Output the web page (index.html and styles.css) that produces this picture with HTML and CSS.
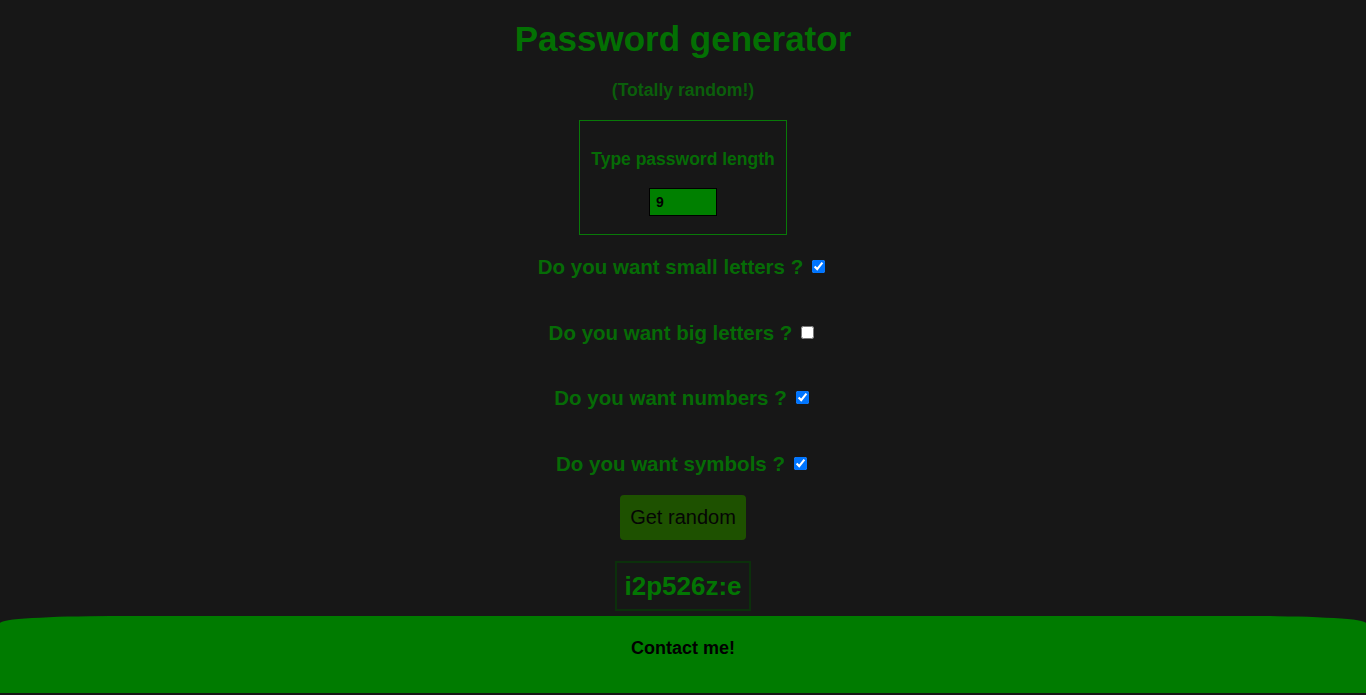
FILE: index.html
```html
<!DOCTYPE html>
<html lang="en">
<head>
<meta charset="utf-8">
<title>Password generator</title>
<link rel="stylesheet" href="styles.css">
</head>
<body>
<main class="page">
  <h1 class="title">Password generator</h1>
  <p class="subtitle">(Totally random!)</p>
  <div class="length-box">
    <label class="length-label" for="len">Type password length</label>
    <input class="length-input" id="len" type="text" value="9">
  </div>
  <div class="options">
    <label class="option">Do you want small letters ? <input type="checkbox" checked></label>
    <label class="option">Do you want big letters ? <input type="checkbox"></label>
    <label class="option">Do you want numbers ? <input type="checkbox" checked></label>
    <label class="option">Do you want symbols ? <input type="checkbox" checked></label>
  </div>
  <button class="get-btn" type="button">Get random</button>
  <div class="result">i2p526z:e</div>
</main>
<footer class="footer">Contact me!</footer>
</body>
</html>
```

FILE: styles.css
```css
html, body {
  margin: 0;
  padding: 0;
}
body {
  background: #171717;
  font-family: "Liberation Sans", Arial, sans-serif;
  height: 695px;
  overflow: hidden;
}
.page {
  display: flex;
  flex-direction: column;
  align-items: center;
}
.title {
  margin: 18px 0 0;
  font-size: 35px;
  line-height: 41px;
  font-weight: bold;
  color: #037003;
}
.subtitle {
  margin: 21px 0 0;
  font-size: 17.6px;
  line-height: 21px;
  font-weight: bold;
  color: #0b5e0b;
}
.length-box {
  margin-top: 19px;
  width: 206px;
  height: 113px;
  border: 1px solid #087a08;
  display: flex;
  flex-direction: column;
  align-items: center;
}
.length-label {
  margin-top: 29px;
  font-size: 17.5px;
  line-height: 18px;
  font-weight: bold;
  color: #066b06;
}
.length-input {
  margin-top: 20px;
  width: 68px;
  height: 28px;
  box-sizing: border-box;
  border: 1px solid #000;
  background: #008000;
  color: #000;
  font-family: "Liberation Sans", Arial, sans-serif;
  font-weight: bold;
  font-size: 14px;
  padding: 0 6px;
  outline: none;
}
.options {
  margin-top: 20px;
  display: flex;
  flex-direction: column;
  align-items: center;
  gap: 42.5px;
}
.option {
  font-size: 20.5px;
  line-height: 23px;
  font-weight: bold;
  color: #066b06;
  display: flex;
  align-items: center;
}
.option input {
  width: 13px;
  height: 13px;
  margin: 0 3px 0 9px;
}
.get-btn {
  margin-top: 20px;
  width: 126px;
  height: 45px;
  border: none;
  border-radius: 4px;
  background: #1e5100;
  color: #050505;
  font-family: "Liberation Sans", Arial, sans-serif;
  font-size: 20px;
  padding: 0;
}
.result {
  margin-top: 21px;
  border: 2px solid #0b300b;
  padding: 8px 7px;
  font-size: 26px;
  line-height: 30px;
  font-weight: bold;
  color: #037503;
}
.footer {
  margin-top: 5px;
  height: 77px;
  box-sizing: border-box;
  padding-top: 22px;
  background: #007b00;
  border-top-left-radius: 110px 7px;
  border-top-right-radius: 110px 7px;
  text-align: center;
  font-size: 18px;
  line-height: 21px;
  font-weight: bold;
  color: #000;
}
```
